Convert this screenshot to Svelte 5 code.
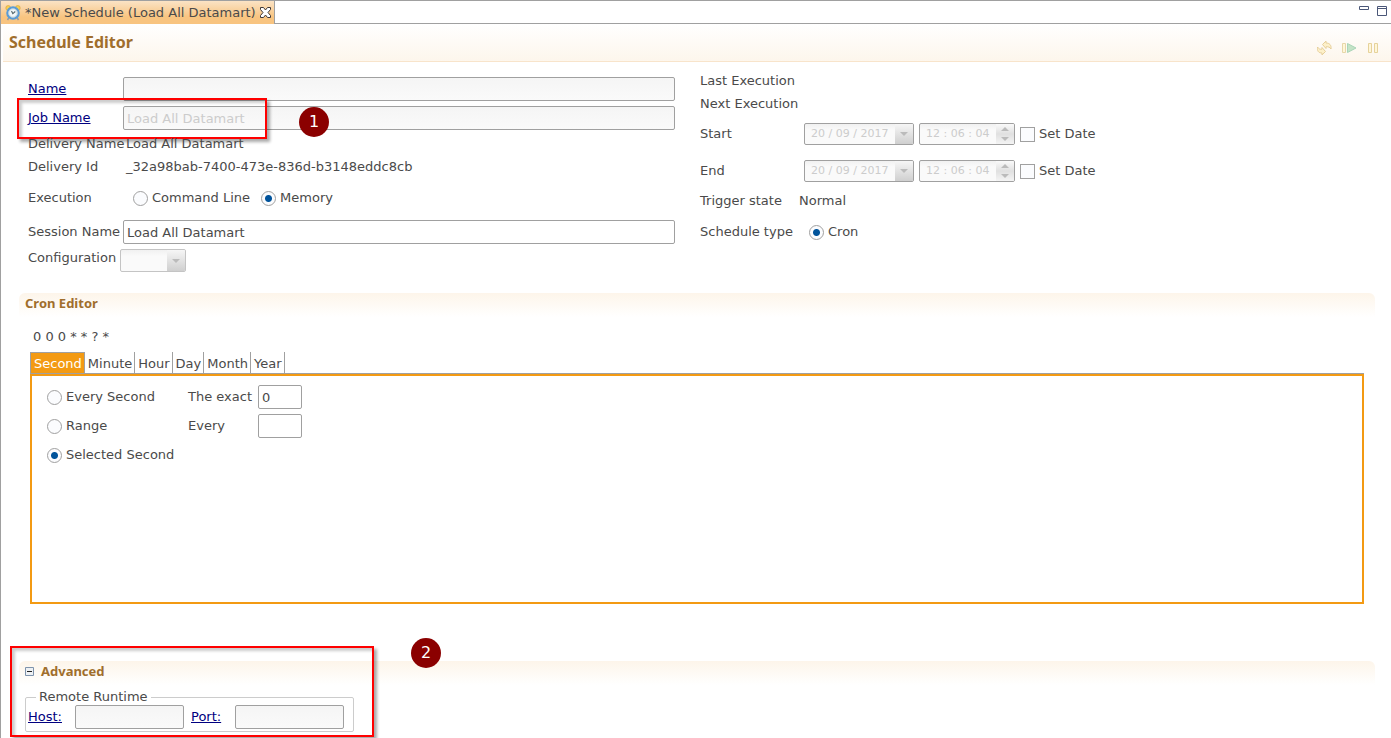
<script lang="ts">
	const tabs = ['Second', 'Minute', 'Hour', 'Day', 'Month', 'Year'];
	const dates = [
		{ id: 'start', label: 'Start' },
		{ id: 'end', label: 'End' }
	];

	let activeTab = $state('Second');
	let execution = $state('memory');
	let secondMode = $state('selected');
	let sessionName = $state('Load All Datamart');
	let exact = $state('0');
	let every = $state('');
	let advancedOpen = $state(true);
</script>

<div class="editor">
	<header class="tab-bar">
		<div class="file-tab">
			<svg class="clock" width="16" height="16" viewBox="0 0 16 16">
				<path d="M4 12.5 2.5 15M12 12.5l1.5 2.5" stroke="#8d9aac" stroke-width="1.5" />
				<circle cx="3.2" cy="3" r="2.4" fill="#f6cf55" stroke="#d8a63b" stroke-width=".7" />
				<circle cx="12.8" cy="3" r="2.4" fill="#f6cf55" stroke="#d8a63b" stroke-width=".7" />
				<circle cx="8" cy="8" r="5.7" fill="#f3f8fa" stroke="#5a9bd5" stroke-width="2.2" />
				<circle cx="8" cy="8" r="4.2" fill="none" stroke="#b8c8ce" stroke-width=".8" />
				<path d="m6.5 6 1.3 2.6L10.300 6.500" fill="none" stroke="#53656b" stroke-width="1.1" />
			</svg>
			<span>*New Schedule (Load All Datamart)</span>
			<button class="icon-button" aria-label="Close">
				<svg width="11" height="11" viewBox="0 0 11 11">
					<path
						d="M.5.5h3l2 2.5 2-2.5h3v2L8 5.5l2.500 3v2h-3l-2-2.500-2 2.500h-3v-2L3 5.500.5 2.500z"
						fill="#fff"
						stroke="#3e3839"
					/>
				</svg>
			</button>
		</div>
		<div class="window-controls">
			<button class="icon-button" aria-label="Minimize">
				<svg width="10" height="10" viewBox="0 0 10 10">
					<path d="M.5.5h9v3h-9z" fill="#fff" stroke="#4b5778" />
				</svg>
			</button>
			<button class="icon-button" aria-label="Maximize">
				<svg width="10" height="10" viewBox="0 0 10 10">
					<path d="M.5.5h9v9h-9zM.5 2.500h9" fill="#fff" stroke="#4b5778" />
				</svg>
			</button>
		</div>
	</header>

	<div class="title-bar">
		<h1>Schedule Editor</h1>
		<div class="toolbar">
			<button class="icon-button" aria-label="Refresh">
				<svg width="16" height="16" viewBox="0 0 16 16" fill="#fdf0c9" stroke="#e6cf9b">
					<path d="M5.500 4.500 9 1v2c3.500 0 5.500 2 5 6-1.200-1.700-2.500-2.500-5-2.200v1.700z" />
					<path d="M8.500 11.500 5 15v-2c-3.500 0-5-2-4.500-6C1.700 8.700 2.500 9.500 5 9.200V7.500z" />
				</svg>
			</button>
			<button class="icon-button" aria-label="Resume">
				<svg width="16" height="16" viewBox="0 0 16 16">
					<path d="M1.500 3.500h3v9h-3z" fill="#fff6d8" stroke="#e6d7a9" />
					<path d="M6.500 3.500v9l8.500-4.500z" fill="#c4e3c6" stroke="#a9d5b7" />
				</svg>
			</button>
			<button class="icon-button" aria-label="Pause">
				<svg width="16" height="16" viewBox="0 0 16 16" fill="#fff6d8" stroke="#e6d29b">
					<path d="M3.500 3.500h3v9h-3zM9.500 3.500h3v9h-3z" />
				</svg>
			</button>
		</div>
	</div>

	<div class="form">
		<div class="column general">
			<div class="row field">
				<div class="caption"><a href="#name">Name</a></div>
				<input id="name" class="text wide" aria-label="Name" disabled />
			</div>
			<div class="row field">
				<div class="caption"><a href="#job-name">Job Name</a></div>
				<input
					id="job-name"
					class="text wide"
					aria-label="Job Name"
					value="Load All Datamart"
					disabled
				/>
				<span class="highlight job-highlight"></span>
				<span class="badge job-badge">1</span>
			</div>
			<div class="row">
				<span class="caption">Delivery Name</span>
				<span class="value">Load All Datamart</span>
			</div>
			<div class="row">
				<span class="caption">Delivery Id</span>
				<span class="value">_32a98bab-7400-473e-836d-b3148eddc8cb</span>
			</div>
			<div class="row execution">
				<span class="caption">Execution</span>
				<div class="options">
					<label>
						<input type="radio" value="command" bind:group={execution} />Command Line
					</label>
					<label>
						<input type="radio" value="memory" bind:group={execution} />Memory
					</label>
				</div>
			</div>
			<div class="row field">
				<label class="caption" for="session-name">Session Name</label>
				<input id="session-name" class="text wide" bind:value={sessionName} />
			</div>
			<div class="row field configuration">
				<label class="caption" for="configuration">Configuration</label>
				<div class="select">
					<select id="configuration" disabled><option></option></select>
					<span class="drop"></span>
				</div>
			</div>
		</div>

		<div class="column">
			<div class="row">Last Execution</div>
			<div class="row">Next Execution</div>
			{#each dates as date (date.id)}
				<div class="row date-row">
					<label class="caption" for="{date.id}-date">{date.label}</label>
					<div class="picker date">
						<input id="{date.id}-date" value="20 / 09 / 2017" disabled />
						<button class="drop" aria-label="Open calendar" disabled></button>
					</div>
					<div class="picker time">
						<input aria-label="{date.label} time" value="12 : 06 : 04" disabled />
						<span class="spinner"></span>
					</div>
					<label><input type="checkbox" />Set Date</label>
				</div>
			{/each}
			<div class="row">
				<span class="caption state">Trigger state</span>
				<span>Normal</span>
			</div>
			<div class="row execution">
				<span class="caption type">Schedule type</span>
				<label><input type="radio" name="type" value="cron" checked />Cron</label>
			</div>
		</div>
	</div>

	<section class="cron">
		<h2>Cron Editor</h2>
		<div class="expression">0 0 0 * * ? *</div>
		<div class="cron-tabs" role="tablist">
			{#each tabs as tab (tab)}
				<button
					role="tab"
					aria-selected={activeTab === tab}
					class:active={activeTab === tab}
					onclick={() => (activeTab = tab)}>{tab}</button
				>
			{/each}
		</div>
		<div class="panel">
			<div class="modes">
				<label><input type="radio" value="every" bind:group={secondMode} />Every Second</label>
				<label><input type="radio" value="range" bind:group={secondMode} />Range</label>
				<label>
					<input type="radio" value="selected" bind:group={secondMode} />Selected Second
				</label>
			</div>
			<div class="values">
				<div class="row field">
					<label for="exact">The exact</label>
					<input id="exact" class="text" bind:value={exact} />
				</div>
				<div class="row field">
					<label for="every">Every</label>
					<input id="every" class="text" bind:value={every} />
				</div>
			</div>
		</div>
	</section>

	<section class="advanced">
		<h2>
			<button
				class="icon-button"
				aria-label="Toggle advanced"
				aria-expanded={advancedOpen}
				onclick={() => (advancedOpen = !advancedOpen)}
			>
				<svg width="9" height="9" viewBox="0 0 9 9">
					<path d="M.5.5h8v8h-8z" fill="#eef1f4" stroke="#7e93ac" />
					<path d="M2 4.500h5" stroke="#222" />
				</svg>
			</button>
			Advanced
		</h2>
		{#if advancedOpen}
			<fieldset>
				<legend>Remote Runtime</legend>
				<div class="row field">
					<a href="#host">Host:</a>
					<input id="host" class="text" aria-label="Host" disabled />
					<a href="#port">Port:</a>
					<input id="port" class="text" aria-label="Port" disabled />
				</div>
			</fieldset>
		{/if}
		<span class="highlight advanced-highlight"></span>
		<span class="badge advanced-badge">2</span>
	</section>
</div>

<style>
	:global(body) {
		margin: 0;
		background: #fff;
	}

	.editor {
		box-sizing: border-box;
		min-height: 100vh;
		border-top: 1px solid #a0a0a0;
		border-left: 1px solid #a0a0a0;
		color: #4a4a4a;
		font: 13px/18px 'DejaVu Sans', Verdana, sans-serif;
		overflow: hidden;
	}

	.editor :is(input, button, select) {
		box-sizing: border-box;
		margin: 0;
		color: inherit;
		font: inherit;
	}

	a {
		color: #000080;
	}

	.icon-button {
		display: flex;
		padding: 0;
		border: 0;
		background: none;
	}

	/* title strip */
	.tab-bar {
		display: flex;
		justify-content: space-between;
		height: 23px;
	}

	.file-tab {
		display: flex;
		align-items: center;
		gap: 4px;
		padding: 0 3px 0 4px;
		border-right: 1px solid #a0a0a0;
		background: linear-gradient(#fbe3c5, #f8c480 70%);
		white-space: nowrap;
	}

	.window-controls {
		display: flex;
		flex: 1;
		justify-content: flex-end;
		gap: 8px;
		padding: 5px 4px 0 0;
		border-bottom: 1px solid #a0a0a0;
	}

	.title-bar {
		display: flex;
		align-items: center;
		justify-content: space-between;
		box-sizing: border-box;
		height: 38px;
		margin-left: 2px;
		padding: 0 10px 0 6px;
		border-bottom: 1px solid #f8e4cb;
		background: linear-gradient(#fff, #fdf6ec);
	}

	h1,
	h2 {
		margin: 0;
		color: #a06e2c;
		font-family: 'Noto Sans', sans-serif;
		font-weight: bold;
	}

	h1 {
		padding-bottom: 2px;
		font-size: 16px;
	}

	.toolbar {
		display: flex;
		gap: 8px;
		padding-top: 10px;
	}

	/* form */
	.form {
		display: grid;
		grid-template-columns: 1fr 1fr;
		gap: 25px;
		padding: 10px 44px 0 27px;
	}

	.column {
		display: flex;
		flex-direction: column;
		gap: 5px;
	}

	.general {
		padding-top: 5px;
	}

	.row {
		position: relative;
		display: flex;
		align-items: center;
		min-height: 18px;
		white-space: nowrap;
	}

	.field {
		min-height: 24px;
	}

	.execution {
		min-height: 34px;
	}

	.date-row {
		min-height: 32px;
	}

	.caption {
		flex: none;
		width: 95px;
	}

	.value {
		padding-left: 3px;
	}

	.text {
		height: 24px;
		padding: 0 3px;
		border: 1px solid #a0a0a0;
		border-radius: 2px;
		background: #fff;
	}

	.editor .text:disabled {
		background: linear-gradient(#f5f5f5, #fafafa);
		color: #ccc;
	}

	.wide {
		flex: 1;
		min-width: 0;
	}

	label:has(input) {
		display: flex;
		align-items: center;
		gap: 4px;
	}

	input[type='radio'],
	input[type='checkbox'] {
		appearance: none;
		flex: none;
		width: 15px;
		height: 15px;
		border: 1px solid #a0a0a0;
		background: #fbfcfe;
	}

	input[type='radio'] {
		border-radius: 50%;
	}

	input[type='radio']:checked {
		background: radial-gradient(circle, #00539b 3px, #fbfcfe 4px);
	}

	.options {
		display: flex;
		gap: 11px;
		padding-left: 10px;
	}

	.configuration {
		align-items: flex-start;
	}

	.configuration .caption {
		width: 92px;
	}

	.select,
	.picker {
		display: flex;
		box-sizing: border-box;
		height: 22px;
		border: 1px solid #a0a0a0;
		border-radius: 2px;
		background: linear-gradient(#f1f1f1, #fafafa 30%);
		overflow: hidden;
	}

	.select {
		width: 66px;
		height: 23px;
		border-color: #c4c4c4;
	}

	.select select,
	.picker input {
		appearance: none;
		flex: 1;
		min-width: 0;
		padding: 0 6px;
		border: 0;
		background: none;
	}

	.editor .picker input {
		color: #ccc;
		font-size: 11px;
	}

	.drop {
		display: grid;
		place-items: center;
		width: 18px;
		padding: 0;
		border: 0;
		background: linear-gradient(#f6f6f6, #cfcfcf);
	}

	.drop::before,
	.spinner::before,
	.spinner::after {
		border: 4px solid transparent;
		border-bottom-width: 0;
		border-top-color: #bbb;
		content: '';
	}

	.spinner {
		display: flex;
		flex-direction: column;
		align-items: center;
		justify-content: center;
		gap: 6px;
		width: 18px;
		background: linear-gradient(#fafafa, #e0e0e0 50%, #f4f4f4);
	}

	.spinner::before {
		transform: rotate(180deg);
	}

	.date-row .caption {
		width: 104px;
	}

	.date {
		width: 110px;
		margin-right: 5px;
	}

	.time {
		width: 96px;
		margin-right: 5px;
	}

	.state {
		width: 99px;
	}

	.type {
		width: 109px;
	}

	/* sections */
	.cron,
	.advanced {
		position: relative;
		margin: 20px 16px 0 18px;
	}

	h2 {
		display: flex;
		align-items: center;
		gap: 7px;
		box-sizing: border-box;
		height: 24px;
		padding: 0 0 4px 6px;
		border-radius: 6px 6px 0 0;
		background: linear-gradient(#fdf5ea, #fff);
		font-size: 13px;
		line-height: 20px;
	}

	.expression {
		padding: 11px 14px 6px;
	}

	.cron-tabs {
		display: flex;
		margin: 0 11px;
		border-bottom: 1px solid #a0a0a0;
	}

	.cron-tabs button {
		height: 21px;
		padding: 2px 2px 0 3px;
		border: 0;
		border-right: 1px solid #a0a0a0;
		background: none;
	}

	.cron-tabs .active {
		border-top: 1px solid #a0a0a0;
		border-left: 1px solid #a0a0a0;
		background: #f39a13;
		color: #fff;
	}

	.panel {
		display: flex;
		box-sizing: border-box;
		min-height: 230px;
		margin: 0 11px;
		padding: 9px 15px;
		border: 2px solid #f39a13;
	}

	.modes,
	.values {
		display: flex;
		flex-direction: column;
		gap: 5px;
	}

	.modes {
		width: 141px;
	}

	.modes label {
		height: 24px;
	}

	.values label {
		width: 70px;
	}

	.values .text {
		width: 44px;
	}

	.advanced {
		margin-top: 57px;
	}

	fieldset {
		width: 327px;
		margin: 4px 0 0 6px;
		padding: 0 0 2px;
		border: 1px solid #ccc;
		border-radius: 2px;
	}

	legend {
		margin-left: 10px;
		padding: 0 3px;
		line-height: 16px;
	}

	fieldset a {
		width: 44px;
		padding-left: 2px;
	}

	fieldset a:first-child {
		width: 47px;
	}

	fieldset .text {
		width: 109px;
		margin-right: 5px;
	}

	/* annotations drawn over the form */
	.highlight {
		position: absolute;
		box-sizing: border-box;
		border: 2px solid #f00;
		box-shadow:
			3px 3px 3px #0005,
			inset 3px 3px 3px #0003;
		pointer-events: none;
	}

	.badge {
		position: absolute;
		width: 30px;
		height: 30px;
		border-radius: 50%;
		background: #8b0000;
		color: #fff;
		font-size: 16px;
		line-height: 30px;
		text-align: center;
	}

	.job-highlight {
		top: -8px;
		left: -11px;
		width: 250px;
		height: 41px;
	}

	.job-badge {
		top: 1px;
		left: 271px;
	}

	.advanced-highlight {
		top: -15px;
		left: -9px;
		width: 364px;
		height: 91px;
	}

	.advanced-badge {
		top: -23px;
		left: 392px;
	}
</style>
